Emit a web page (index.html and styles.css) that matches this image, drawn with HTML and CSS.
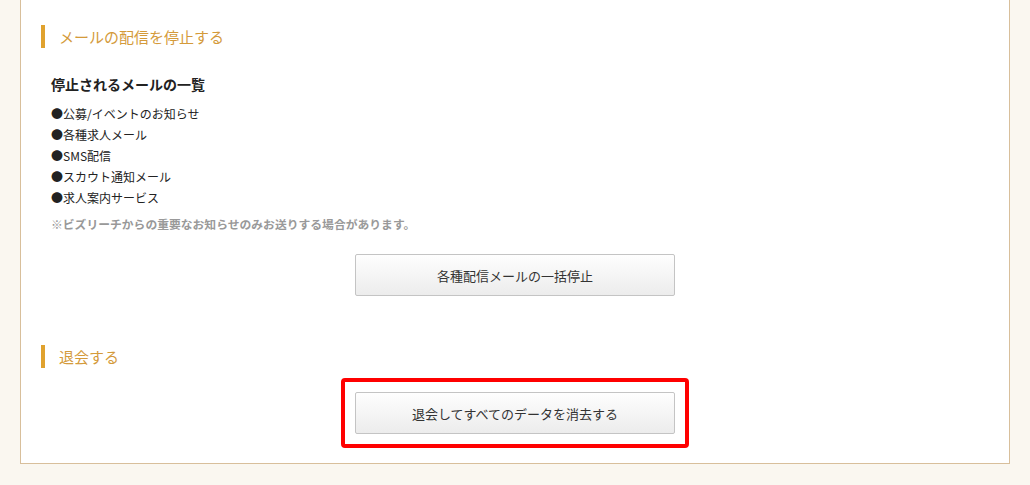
FILE: index.html
```html
<!DOCTYPE html>
<html lang="ja">
<head>
<meta charset="utf-8">
<title>メール配信停止・退会</title>
<link rel="stylesheet" href="styles.css">
</head>
<body>
<div class="card">
  <section class="section">
    <h2 class="sec-title">メールの配信を停止する</h2>
    <div class="sec-body">
      <h3 class="sub-title">停止されるメールの一覧</h3>
      <ul class="mail-list">
        <li>●公募/イベントのお知らせ</li>
        <li>●各種求人メール</li>
        <li>●SMS配信</li>
        <li>●スカウト通知メール</li>
        <li>●求人案内サービス</li>
      </ul>
      <p class="note">※ビズリーチからの重要なお知らせのみお送りする場合があります。</p>
      <div class="btn-row">
        <button class="btn">各種配信メールの一括停止</button>
      </div>
    </div>
  </section>
  <section class="section section-quit">
    <h2 class="sec-title">退会する</h2>
    <div class="btn-row btn-row-quit">
      <div class="highlight">
        <button class="btn">退会してすべてのデータを消去する</button>
      </div>
    </div>
  </section>
</div>
</body>
</html>
```

FILE: styles.css
```css
html, body {
  margin: 0;
  padding: 0;
}
body {
  background: #faf7f0;
  font-family: "Noto Sans CJK JP", "Noto Sans", sans-serif;
  color: #333;
}
.card {
  margin-left: 20px;
  width: 990px;
  box-sizing: border-box;
  background: #fff;
  border: 1px solid #d8bf9b;
  border-top: none;
  padding: 25px 20px 15px 20px;
}
.section {
  margin: 0;
}
.sec-title {
  margin: 0;
  height: 23px;
  line-height: 23px;
  border-left: 4px solid #e0a22e;
  padding-left: 14px;
  font-size: 15px;
  font-weight: normal;
  color: #d49a3a;
}
.sec-body {
  padding-left: 10px;
}
.sub-title {
  margin: 26px 0 0 0;
  font-size: 14px;
  line-height: 21px;
  font-weight: bold;
  color: #222;
}
.mail-list {
  list-style: none;
  margin: 8px 0 0 0;
  padding: 0;
  font-size: 12px;
  line-height: 21px;
  color: #222;
}
.note {
  margin: 6px 0 0 0;
  font-size: 11.8px;
  line-height: 20px;
  color: #999;
  font-weight: bold;
}
.btn-row {
  display: flex;
  justify-content: center;
  margin-top: 20px;
  margin-left: -10px;
}
.btn {
  width: 320px;
  height: 42px;
  box-sizing: border-box;
  border: 1px solid #c4c4c4;
  border-radius: 2px;
  background: linear-gradient(#fefefe, #ececec);
  font-family: "Noto Sans CJK JP", "Noto Sans", sans-serif;
  font-size: 13px;
  color: #333;
  padding: 0;
}
.section-quit {
  margin-top: 49px;
}
.btn-row-quit {
  margin-top: 10px;
  margin-left: 0;
}
.highlight {
  border: 4px solid #ff0000;
  border-radius: 4px;
  padding: 10px;
  display: flex;
}
```
